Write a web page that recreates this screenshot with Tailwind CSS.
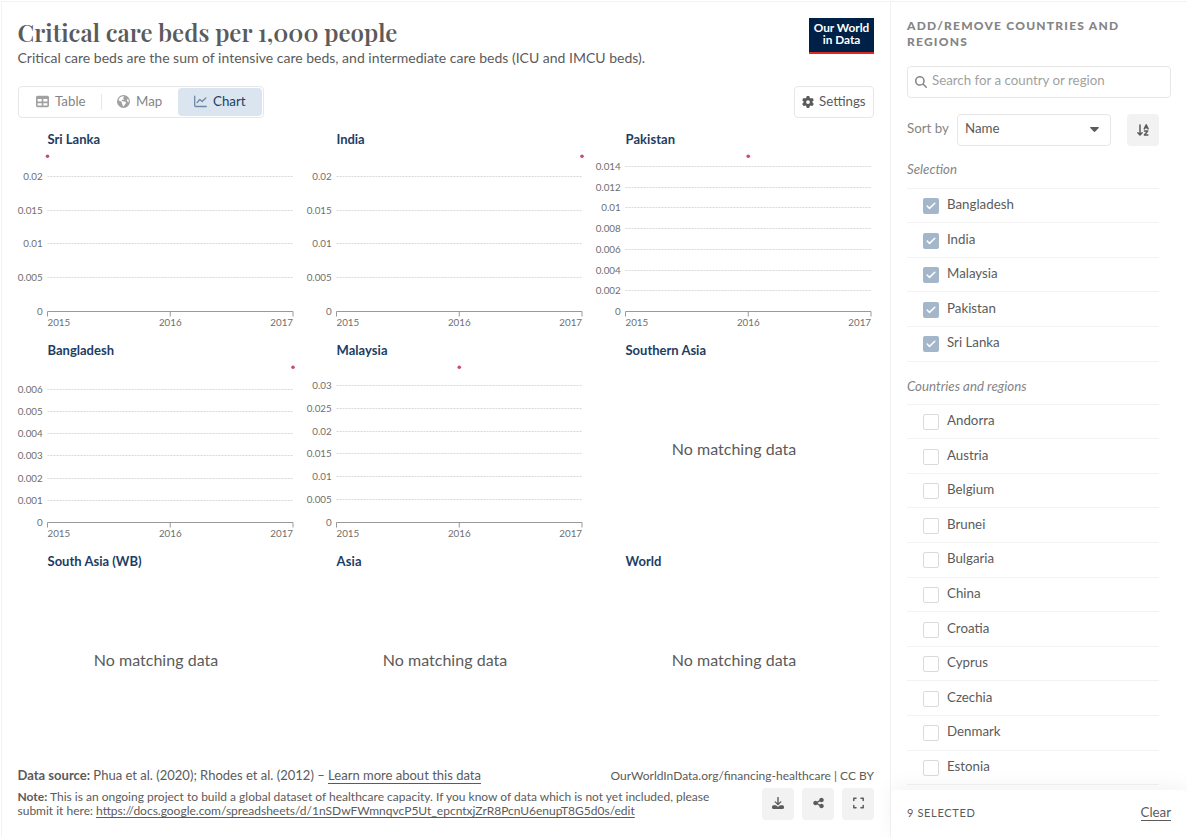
<!DOCTYPE html>
<html lang="en">
<head>
<meta charset="utf-8">
<title>Critical care beds per 1,000 people</title>
<script src="https://cdn.jsdelivr.net/npm/@tailwindcss/browser@4"></script>
</head>
<body class="bg-white">
<div class="flex h-[837px] w-[1187px] overflow-hidden pl-px pt-px font-['Lato',sans-serif] text-[#5b5b5b]">
  <main class="flex w-[889px] shrink-0 flex-col border-l border-t border-[#f2f2f2] pl-4 pr-4">
    <header class="flex h-[84px] justify-between pt-4">
      <div class="-ml-[0.5px]">
        <h1 class="h-[30px] whitespace-nowrap font-['Playfair_Display','Liberation_Serif',serif] text-[24px] leading-[29px] font-semibold">Critical care beds per 1,000 people</h1>
        <p class="whitespace-nowrap text-[14px] leading-[20px]">Critical care beds are the sum of intensive care beds, and intermediate care beds (ICU and IMCU beds).</p>
      </div>
      <div class="flex h-9 w-[65px] flex-col items-center border-b-[2px] border-[#dc2a20] bg-[#002147] pt-[4px] text-[11.8px] leading-[12px] font-bold whitespace-nowrap text-white">
        <span>Our World</span><span>in Data</span>
      </div>
    </header>
    <div class="flex h-8 justify-between text-[13.3px]">
      <nav class="flex h-8 w-[246px] items-center rounded border border-[#e7e7e7] p-px text-[#858585]">
        <div class="flex h-7 w-[81px] items-center pl-4">
          <svg class="-mt-px mr-[6px] h-[13px] w-[13px]" viewBox="0 0 512 512" fill="#a1a1a1"><path d="M64 256V160H224v96H64zm0 64H224v96H64V320zm224 96V320H448v96H288zM448 256H288V160H448v96zM64 32C28.7 32 0 60.7 0 96V416c0 35.3 28.7 64 64 64H448c35.3 0 64-28.7 64-64V96c0-35.3-28.7-64-64-64H64z"/></svg><span>Table</span>
        </div>
        <div class="flex h-4 w-[77px] items-center border-l border-[#e7e7e7] pl-[15px]">
          <svg class="-mt-px mr-[6px] h-[13px] w-[13px]" viewBox="0 0 512 512" fill="#a1a1a1"><path d="M57.7 193l9.4 16.4c8.3 14.5 21.9 25.2 38 29.8L163 255.7c17.2 4.9 29 20.6 29 38.5v39.9c0 11 6.2 21 16 25.9s16 14.9 16 25.9v39c0 15.6 14.9 26.9 29.9 22.6c16.1-4.6 28.6-17.5 32.7-33.8l2.8-11.2c4.2-16.9 15.2-31.4 30.3-40l8.1-4.6c15-8.5 24.2-24.5 24.2-41.7v-8.3c0-12.7-5.1-24.9-14.1-33.9l-3.9-3.9c-9-9-21.2-14.1-33.9-14.1H257c-11.1 0-22.1-2.9-31.8-8.4l-34.5-19.7c-4.3-2.5-7.6-6.5-9.2-11.2c-3.2-9.6 1.1-20 10.2-24.5l5.9-3c6.6-3.3 14.3-3.9 21.3-1.5l23.2 7.7c8.2 2.7 17.2-.4 21.9-7.5c4.7-7 4.2-16.3-1.2-22.8l-13.6-16.3c-10-12-9.9-29.5 .3-41.3l15.7-18.3c8.8-10.3 10.2-25 3.5-36.7l-2.4-4.2c-3.5-.2-6.9-.3-10.4-.3C163.1 48 84.4 108.9 57.7 193zM464 256c0-36.8-9.6-71.4-26.4-101.5L412 164.8c-15.7 6.3-23.8 23.8-18.5 39.8l16.9 50.7c3.5 10.4 12 18.3 22.6 20.9l29.1 7.3c1.2-9 1.8-18.2 1.8-27.5zM0 256a256 256 0 1 1 512 0A256 256 0 1 1 0 256z"/></svg><span>Map</span>
        </div>
        <div class="flex h-7 w-[84px] items-center rounded-sm bg-[#dbe5f0] pl-4 text-[#1d3d63]">
          <svg class="-mt-px mr-[6px] h-[13px] w-[13px]" viewBox="0 0 13 13" fill="none" stroke="#6e87a8" stroke-width="1.3" stroke-linecap="round" stroke-linejoin="round"><path d="M.7 1.2v9.2q0 1.1 1.1 1.1h10.5M3.2 7.5l2.6-3 2.4 2L11.8 3"/></svg><span>Chart</span>
        </div>
      </nav>
      <button class="flex h-8 w-20 items-center rounded border border-[#e7e7e7] pl-[7px]">
        <svg class="mr-[5px] h-3 w-3" viewBox="0 0 512 512" fill="#5b5b5b"><path d="M495.9 166.6c3.2 8.7 .5 18.4-6.4 24.6l-43.3 39.4c1.1 8.3 1.7 16.8 1.7 25.4s-.6 17.1-1.7 25.4l43.3 39.4c6.9 6.2 9.6 15.9 6.4 24.6c-4.4 11.9-9.7 23.3-15.8 34.3l-4.7 8.1c-6.6 11-14 21.4-22.1 31.2c-5.9 7.2-15.7 9.6-24.5 6.8l-55.7-17.7c-13.4 10.3-28.2 18.9-44 25.4l-12.5 57.1c-2 9.1-9 16.3-18.2 17.8c-13.8 2.3-28 3.5-42.5 3.5s-28.7-1.2-42.5-3.5c-9.2-1.5-16.2-8.7-18.2-17.8l-12.5-57.1c-15.8-6.5-30.6-15.1-44-25.4L83.1 425.9c-8.8 2.8-18.6 .3-24.5-6.8c-8.1-9.8-15.5-20.2-22.1-31.2l-4.7-8.1c-6.1-11-11.4-22.4-15.8-34.3c-3.2-8.7-.5-18.4 6.4-24.6l43.3-39.4C64.6 273.1 64 264.6 64 256s.6-17.1 1.7-25.4L22.4 191.2c-6.9-6.2-9.6-15.9-6.4-24.6c4.4-11.9 9.7-23.3 15.8-34.3l4.7-8.1c6.6-11 14-21.4 22.1-31.2c5.9-7.2 15.7-9.6 24.5-6.8l55.7 17.7c13.4-10.3 28.2-18.9 44-25.4l12.5-57.1c2-9.1 9-16.3 18.2-17.8C227.3 1.2 241.5 0 256 0s28.7 1.2 42.5 3.5c9.2 1.5 16.2 8.7 18.2 17.8l12.5 57.1c15.8 6.5 30.6 15.1 44 25.4l55.7-17.7c8.8-2.8 18.6-.3 24.5 6.8c8.1 9.8 15.5 20.2 22.1 31.2l4.7 8.1c6.1 11 11.4 22.4 15.8 34.3zM256 336a80 80 0 1 0 0-160 80 80 0 1 0 0 160z"/></svg><span>Settings</span>
      </button>
    </div>
    <section id="charts" class="mt-3 grid h-[633px] w-[867px] shrink-0 grid-cols-3 grid-rows-3"></section>
    <footer class="flex flex-col pt-[2px]">
      <div class="flex h-5 items-center justify-between whitespace-nowrap">
        <p class="-ml-[0.5px] text-[13.02px] leading-5"><b>Data source:</b> Phua et al. (2020); Rhodes et al. (2012) – <a class="border-b border-[#5b5b5b]">Learn more about this data</a></p>
        <p class="pt-px text-[12px] leading-5">OurWorldInData.org/financing-healthcare | CC BY</p>
      </div>
      <div class="flex justify-between pt-[3px]">
        <p class="-ml-[0.5px] pt-[2px] text-[12px] leading-[14px] whitespace-nowrap"><b>Note:</b> This is an ongoing project to build a global dataset of healthcare capacity. If you know of data which is not yet included, please<br>submit it here: <a class="underline underline-offset-2">https://docs.google.com/spreadsheets/d/1nSDwFWmnqvcP5Ut_epcntxjZrR8PcnU6enupT8G5d0s/edit</a></p>
        <div class="flex gap-2">
          <button class="flex size-8 items-center justify-center rounded bg-[#f2f2f2]"><svg class="-mt-[2px] size-3" viewBox="0 0 12 12" fill="#5b5b5b"><path d="M5.3.6a.7.7 0 0 1 1.4 0v5.300l1.600-1.500a.65.65 0 0 1 .9.950L6.500 8a.7.7 0 0 1-1 0L2.800 5.350a.65.65 0 0 1 .9-.950l1.600 1.500zM1.500 8.300H4l1.100 1a1.300 1.300 0 0 0 1.800 0L8 8.300h2.500A1.500 1.500 0 0 1 12 9.800v.6a1.500 1.500 0 0 1-1.500 1.500h-9A1.500 1.500 0 0 1 0 10.400v-.6A1.500 1.500 0 0 1 1.500 8.300z"/></svg></button>
          <button class="flex size-8 items-center justify-center rounded bg-[#f2f2f2]"><svg class="-mt-[2px] h-3 w-[11px]" viewBox="0 0 448 512" fill="#5b5b5b"><path d="M352 224c53 0 96-43 96-96s-43-96-96-96s-96 43-96 96c0 4 .2 8 .7 11.900l-94.100 47C145.400 170.200 121.900 160 96 160c-53 0-96 43-96 96s43 96 96 96c25.900 0 49.400-10.200 66.600-26.900l94.100 47c-.5 3.900-.7 7.800-.7 11.900c0 53 43 96 96 96s96-43 96-96s-43-96-96-96c-25.900 0-49.400 10.200-66.600 26.900l-94.100-47c.5-3.900 .7-7.800 .7-11.900s-.2-8-.7-11.900l94.100-47C302.600 213.800 326.100 224 352 224z"/></svg></button>
          <button class="flex size-8 items-center justify-center rounded bg-[#f2f2f2]"><svg class="-mt-[2px] h-3 w-[11px]" viewBox="0 0 11 12" fill="none" stroke="#5b5b5b" stroke-width="1.5" stroke-linecap="round" stroke-linejoin="round"><path d="M.8 3.500V1.300H3M8 1.300h2.200v2.200M10.200 8.500v2.200H8M3 10.700H.8V8.500"/></svg></button>
        </div>
      </div>
    </footer>
  </main>
  <aside class="flex w-[297px] shrink-0 flex-col border-l border-t border-[#f2f2f2] bg-white">
    <div class="h-[144px] shrink-0 px-4">
      <h2 class="pt-4 text-[12px] leading-4 font-black tracking-[1.22px] whitespace-nowrap text-[#858585]">ADD/REMOVE COUNTRIES AND<br>REGIONS</h2>
      <div class="mt-4 flex h-8 w-[264px] items-center rounded border border-[#e7e7e7] pl-[7px] text-[13.3px] text-[#a1a1a1]">
        <svg class="mr-[5px] h-3 w-3" viewBox="0 0 512 512" fill="#858585"><path d="M416 208c0 45.900-14.900 88.300-40 122.700L502.600 457.400c12.500 12.500 12.500 32.800 0 45.300s-32.800 12.500-45.300 0L330.700 376c-34.400 25.200-76.800 40-122.700 40C93.100 416 0 322.900 0 208S93.100 0 208 0S416 93.100 416 208zM208 352a144 144 0 1 0 0-288 144 144 0 1 0 0 288z"/></svg><span class="-mt-[2px]">Search for a country or region</span>
      </div>
      <div class="mt-4 flex h-8 text-[13.3px]">
        <span class="w-[50px] pt-[5px] whitespace-nowrap text-[#858585]">Sort by</span>
        <div class="flex w-[154px] items-center justify-between rounded border border-[#e7e7e7] pr-[11px] pl-[7px]"><span class="-mt-[2px]">Name</span><svg class="-mt-px h-[5px] w-[9px]" viewBox="0 0 9 5" fill="#5b5b5b"><path d="M.7 0h7.600q.9.200.4.900L5 4.700q-.5.400-1 0L.3.900Q-.2.200.7 0z"/></svg></div>
        <button class="ml-4 flex size-8 items-center justify-center rounded bg-[#f2f2f2]"><svg class="size-3" viewBox="0 0 12 12" fill="none" stroke="#5b5b5b" stroke-width="1.500" stroke-linecap="round" stroke-linejoin="round"><path d="M3 1v9.700M.9 8.700L3 10.900l2.100-2.200M7.300 4.900l1.900-4 1.900 4M8 3.700h2.400M7.400 7.100h3.300L7.400 10.900h3.500"/></svg></button>
      </div>
    </div>
    <div class="h-[644px] shrink-0 overflow-hidden pt-[13px] pl-4 text-[13.3px]">
      <h3 class="h-[28.7px] leading-5 text-[#858585] italic">Selection</h3>
      <ul id="selection" class="w-[252px] border-t border-[#f2f2f2]"></ul>
      <h3 class="h-[42px] pt-[14px] leading-5 text-[#858585] italic">Countries and regions</h3>
      <ul id="countries" class="w-[252px] border-t border-[#f2f2f2]"></ul>
    </div>
    <div class="z-10 flex h-[47px] shrink-0 items-center justify-between rounded-t bg-white px-4 shadow-[0_-4px_20px_rgba(0,0,0,0.05)]">
      <span class="text-[11px] tracking-[0.65px]">9 SELECTED</span>
      <a class="-mt-[2px] border-b border-[#5b5b5b] text-[13.3px] leading-[16px]">Clear</a>
    </div>
  </aside>
</div>
<script>
  // Small multiples: one facet per entity
  const facets = [
    { name: 'Sri Lanka', w: 52.5, max: 0.023, step: 0.005, n: 4, year: 0 },
    { name: 'India', w: 28, max: 0.023, step: 0.005, n: 4, year: 2 },
    { name: 'Pakistan', w: 49.5, max: 0.015, step: 0.002, n: 7, year: 1 },
    { name: 'Bangladesh', w: 66.5, max: 0.007, step: 0.001, n: 6, year: 2 },
    { name: 'Malaysia', w: 51, max: 0.034, step: 0.005, n: 6, year: 1 },
    { name: 'Southern Asia', w: 80.5 }, { name: 'South Asia (WB)', w: 94.2 }, { name: 'Asia', w: 25 }, { name: 'World', w: 36 },
  ];
  const x0 = 29.5, x1 = 275, y0 = 181.5, plotH = 155.5;
  document.getElementById('charts').innerHTML = facets.map(f => {
    let g = `<text x="${x0}" y="14" class="fill-[#1d3d63] text-[13px] font-bold" textLength="${f.w}">${f.name}</text>`;
    if (!f.max) {
      g += '<text x="138" y="114" text-anchor="middle" class="fill-[#5b5b5b] text-[16px]" textLength="124.5">No matching data</text>';
    } else {
      for (let i = 0; i <= f.n; i++) {
        const v = i * f.step, y = y0 - v / f.max * plotH;
        if (i) g += `<line x1="${x0}" x2="${x1}" y1="${Math.round(y - .5) + .5}" y2="${Math.round(y - .5) + .5}" stroke="#d8d8d8" stroke-dasharray="2 1"/>`;
        g += `<text x="24.7" y="${(y + 3.5).toFixed(1)}" text-anchor="end" class="fill-[#6e6e6e] text-[9.8px]">${+v.toFixed(3)}</text>`;
      }
      g += `<path d="M${x0} ${y0 + 5}V${y0}H${x1}V${y0 + 5}M${(x0 + x1) / 2} ${y0}v5" fill="none" stroke="#999999"/>`;
      g += [2015, 2016, 2017].map((t, i) => `<text x="${[x0, (x0 + x1) / 2, x1][i]}" y="196" text-anchor="${['start', 'middle', 'end'][i]}" class="fill-[#6e6e6e] text-[9.8px]">${t}</text>`).join('');
      g += `<circle cx="${x0 + (x1 - x0) * f.year / 2}" cy="26.2" r="1.8" fill="#ca4d68"/>`;
    }
    return `<svg class="h-[211px] w-[289px] overflow-visible">${g}</svg>`;
  }).join('');

  const row = (name, on) => `<li class="flex h-[34.6px] items-center border-b border-[#f2f2f2] pl-4 whitespace-nowrap">
    <span class="mt-px mr-2 flex size-4 items-center justify-center rounded-xs ${on ? 'bg-[#a4b6ca]' : 'border border-[#dadada]'}">${on ? '<svg class="h-2 w-[10px]" viewBox="0 0 10 8" fill="none" stroke="#fff" stroke-width="1.5" stroke-linecap="round" stroke-linejoin="round"><path d="M1.2 4l2.3 2.4L8.8 1.2"/></svg>' : ''}</span>
    <span class="-mt-px">${name}</span></li>`;
  document.getElementById('selection').innerHTML = ['Bangladesh', 'India', 'Malaysia', 'Pakistan', 'Sri Lanka'].map(n => row(n, true)).join('');
  document.getElementById('countries').innerHTML = ['Andorra', 'Austria', 'Belgium', 'Brunei', 'Bulgaria', 'China', 'Croatia', 'Cyprus', 'Czechia', 'Denmark', 'Estonia'].map(n => row(n, false)).join('');
</script>
</body>
</html>
